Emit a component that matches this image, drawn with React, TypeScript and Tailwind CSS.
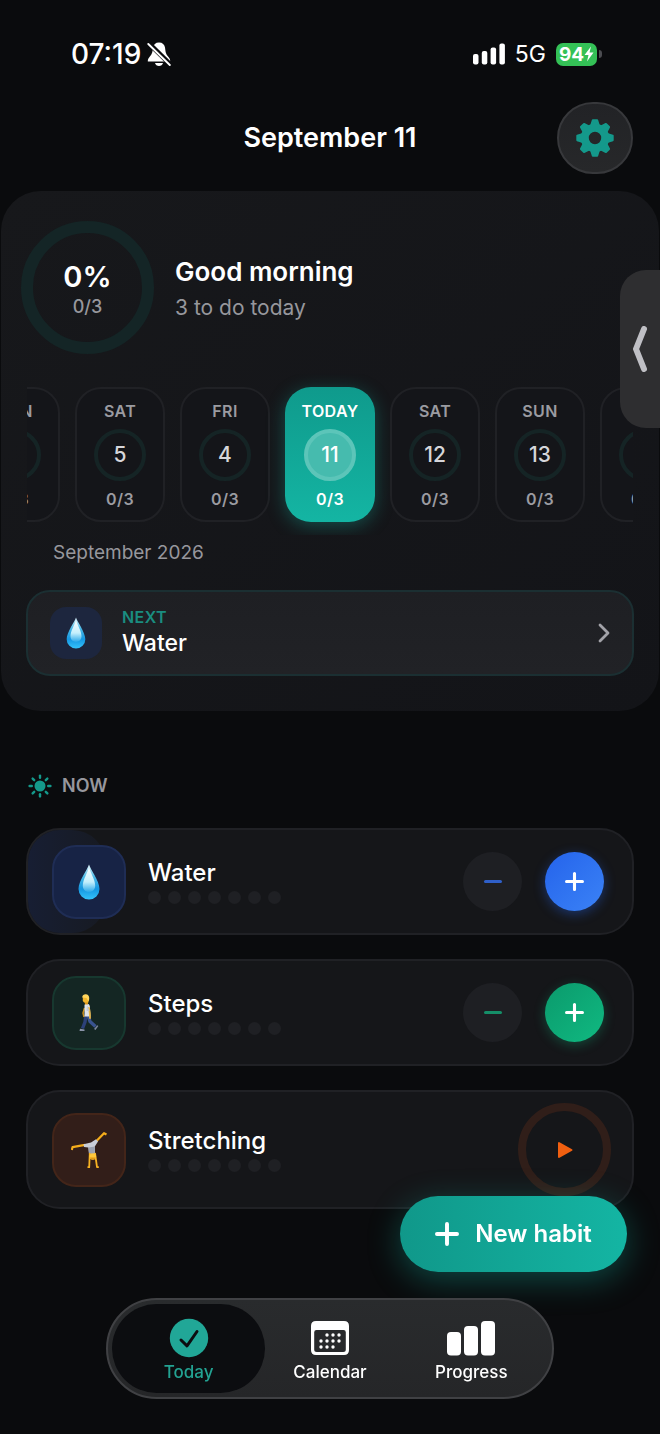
import React, { ReactNode } from 'react';
import clsx from 'clsx';

interface Day {
  label: string;
  date: string;
  today?: boolean;
}

interface Habit {
  name: string;
  icon: ReactNode;
  tile: string;
  kind: 'counter' | 'timer';
  minus?: string;
  plus?: string;
  fill?: string;
}

const days: Day[] = [
  { label: 'SUN', date: '6' },
  { label: 'SAT', date: '5' },
  { label: 'FRI', date: '4' },
  { label: 'TODAY', date: '11', today: true },
  { label: 'SAT', date: '12' },
  { label: 'SUN', date: '13' },
  { label: 'MON', date: '14' },
];

function WaterDrop({ className }: { className: string }) {
  return (
    <svg viewBox="0 0 22 36" className={className} aria-hidden="true">
      <defs>
        <linearGradient id="drop-body" x1="0" y1="0" x2="0" y2="1">
          <stop offset="0" stopColor="#e4f7fd" />
          <stop offset="0.35" stopColor="#4bb9e6" />
          <stop offset="0.7" stopColor="#1597e2" />
          <stop offset="1" stopColor="#35c3fb" />
        </linearGradient>
        <linearGradient id="drop-shine" x1="0" y1="0" x2="0" y2="1">
          <stop offset="0" stopColor="#ffffff" />
          <stop offset="0.6" stopColor="#c4effc" />
          <stop offset="1" stopColor="#2ba9ea" />
        </linearGradient>
      </defs>
      <path d="M11 0.5C12 4.5 21.5 17 21.5 25a10.5 10.5 0 0 1-21 0C0.5 17 10 4.5 11 0.5Z" fill="url(#drop-body)" />
      <path d="M11 3C12 8 17.2 15.5 17.2 21.5c0 4-2.6 6.5-6.2 6.5s-6.200-2.500-6.200-6.500C4.800 15.500 10 8 11 3Z" fill="url(#drop-shine)" />
    </svg>
  );
}

function Walker() {
  return (
    <svg viewBox="0 0 20 38" className="h-[38px] w-5" aria-hidden="true">
      {/* back leg, front leg */}
      <path d="M7 21L6 28L3.500 34.500" fill="none" stroke="#2c4179" strokeWidth="3.400" strokeLinejoin="round" />
      <path d="M9 21L11 27.500L16.500 32.500" fill="none" stroke="#39538f" strokeWidth="3.400" strokeLinejoin="round" />
      <path d="M1 34.800L5.500 35.500L5.500 37H0.500Z" fill="#8a93a8" />
      <path d="M15 35L18.300 31.200L19.300 32L16.500 36Z" fill="#7e879d" />
      {/* arm behind, shirt, arm in front */}
      <path d="M5.500 14L4 19L5 23" fill="none" stroke="#c98f1e" strokeWidth="1.500" />
      <path d="M5.500 11C6.500 9 9.500 9 10.800 12L11.500 22.500H5.500Z" fill="#dfe3ea" />
      <path d="M10 14L10.800 19L11 24" fill="none" stroke="#e9b648" strokeWidth="1.800" strokeLinecap="round" />
      <path d="M8 11L10.500 17H7.500Z" fill="#c5cbd6" />
      <path d="M5.500 7H9V10.500H6Z" fill="#d9951b" />
      <path d="M3.800 3H9.500V8.500H5L3.800 7Z" fill="#f3b52c" />
      <path d="M3.200 3.500C3.200 0.500 6 0 7.800 0.500C10.500 1 10.800 5 9.500 7.500L7.500 4Z" fill="#ffd55c" />
    </svg>
  );
}

function Cartwheel() {
  return (
    <svg viewBox="0 0 36 38" className="h-[38px] w-9" aria-hidden="true">
      <path d="M14 13.800L1.500 16.200L0.800 19" fill="none" stroke="#f5ad1b" strokeWidth="2.200" strokeLinejoin="round" />
      <path d="M25 10.500L33 2.200L35.500 3.500" fill="none" stroke="#f5ad1b" strokeWidth="2.200" strokeLinejoin="round" />
      <path d="M12.500 13.300L20 11.500L25 8.300L27 10.500L23.800 15.500L24 23H18L17.300 16.500L13 16Z" fill="#c9ced8" />
      <path d="M17.500 16.500L23.800 15.500L23.800 23H18Z" fill="#9ba2b0" />
      <path d="M18.800 22L18.200 36.200H16.500" fill="none" stroke="#f7b222" strokeWidth="1.800" strokeLinejoin="round" />
      <path d="M24 22L26 36.200H27.800" fill="none" stroke="#f7b222" strokeWidth="1.800" strokeLinejoin="round" />
      <circle cx="21.800" cy="25.500" r="3.300" fill="#ffc93c" />
      <path d="M18.800 26.500C19.800 29.500 23.800 29.500 24.800 26.500Z" fill="#e29a17" />
    </svg>
  );
}

function Gear() {
  const teeth = [0, 45, 90, 135, 180, 225, 270, 315];
  return (
    <svg viewBox="0 0 38 38" className="size-[38px] text-[#14998b]" aria-hidden="true">
      <circle cx="19" cy="19" r="10.200" fill="none" stroke="currentColor" strokeWidth="8" />
      {teeth.map((angle) => (
        <path
          key={angle}
          d="M15 7L16.800 1.300H21.200L23 7Z"
          transform={`rotate(${angle} 19 19)`}
          fill="currentColor"
          stroke="currentColor"
          strokeWidth="2"
          strokeLinejoin="round"
        />
      ))}
    </svg>
  );
}

function Sun() {
  const rays = [0, 45, 90, 135, 180, 225, 270, 315];
  return (
    <svg viewBox="0 0 24 24" className="size-6 text-[#14998b]" aria-hidden="true">
      <circle cx="12" cy="12" r="5.500" fill="currentColor" />
      {rays.map((angle) => (
        <path
          key={angle}
          d="M12 1.600V3.800"
          transform={`rotate(${angle} 12 12)`}
          stroke="currentColor"
          strokeWidth="2.400"
          strokeLinecap="round"
        />
      ))}
    </svg>
  );
}

function Plus({ className }: { className: string }) {
  return (
    <svg viewBox="0 0 22 22" className={className} aria-hidden="true">
      <path d="M11 1.800V20.200M1.800 11H20.200" stroke="currentColor" strokeWidth="3.600" strokeLinecap="round" />
    </svg>
  );
}

function StatusBar() {
  return (
    <div className="flex h-7 items-center justify-between pr-[58px] pl-[71px]">
      <div className="flex items-center gap-1.5">
        <span className="text-[28px] font-medium">07:19</span>
        <svg viewBox="0 0 24 24" className="size-6" aria-label="Silent mode">
          <path
            d="M12 0.500C8.500 0.500 6.500 2.500 6 5.500C5.500 9 5.500 12 2.500 15C1 17 0.800 17.500 0.800 19.500H23.200C23.200 17.500 23 17 21.500 15C18.500 12 18.500 9 18 5.500C17.500 2.500 15.500 0.500 12 0.500Z"
            fill="#fff"
          />
          <path d="M8 21H16C15.500 23 14 24 12 24S8.500 23 8 21Z" fill="#fff" />
          <path d="M2 1.500L23.500 22.500" stroke="#0a0b0d" strokeWidth="4.800" />
          <path d="M1.300 2L22.800 23" stroke="#fff" strokeWidth="1.900" strokeLinecap="round" />
        </svg>
      </div>
      <div className="flex items-center">
        <svg viewBox="0 0 32 22" className="h-[22px] w-8" aria-label="Signal strength">
          <rect x="0" y="11" width="5.500" height="10.500" rx="2" fill="#fff" />
          <rect x="8.800" y="8" width="5.500" height="13.500" rx="2" fill="#fff" />
          <rect x="17.600" y="4.500" width="5.500" height="17" rx="2" fill="#fff" />
          <rect x="26.400" y="0.500" width="5.500" height="21" rx="2" fill="#fff" />
        </svg>
        <span className="ml-2.5 text-[23px]">5G</span>
        <div className="ml-2.5 flex h-[23px] w-[41px] items-center justify-center rounded-[7px] bg-[#34c156]">
          <span className="text-[19px] leading-none font-bold">94</span>
          <svg viewBox="0 0 10 16" className="h-4 w-2.5" aria-label="Charging">
            <path d="M7 0.500L0.500 9H4.500L3 15.500L9.500 6.500H5.500Z" fill="#fff" />
          </svg>
        </div>
        <span className="ml-0.5 h-2 w-[3px] rounded-r-full bg-[#4b4c50]" />
      </div>
    </div>
  );
}

function DayPill({ label, date, today }: Day) {
  return (
    <button
      type="button"
      className={clsx(
        'flex h-[135px] w-[90px] shrink-0 flex-col items-center gap-2 rounded-[26px]',
        today
          ? 'bg-linear-to-b from-[#0f9a8c] to-[#14b5a3] pt-3.5 text-white shadow-[0_4px_18px_rgba(20,184,166,0.35)]'
          : 'border-2 border-[#202125] bg-[#141519] pt-3 text-[#9b9ba1]',
      )}
    >
      <span className="text-base leading-5 font-semibold tracking-wide">{label}</span>
      <span
        className={clsx(
          'flex size-[52px] items-center justify-center rounded-full border-4 text-[21px] font-medium',
          today ? 'border-[#5cc5b9] bg-[#46bbae] text-white' : 'border-[#152425] text-[#d6d6da]',
        )}
      >
        {date}
      </span>
      <span className="text-base leading-5 font-semibold tracking-wide">0/3</span>
    </button>
  );
}

function Summary() {
  return (
    <section className="mx-px mt-[17px] rounded-[40px] bg-linear-to-br from-[#17181b] to-[#131418] pt-[30px] pb-[35px]">
      <div className="flex items-center gap-[21px] pl-5">
        <div className="flex size-[133px] flex-col items-center justify-center rounded-full border-[12px] border-[#142526] pt-1.5">
          <span className="text-[29px] leading-8 font-semibold">0%</span>
          <span className="text-lg leading-7 font-medium text-[#97979d]">0/3</span>
        </div>
        <div className="flex flex-col gap-1 pt-1">
          <h2 className="text-[26px] leading-8 font-semibold">Good morning</h2>
          <p className="text-[21px] leading-8 text-[#97979d]">3 to do today</p>
        </div>
      </div>

      <div className="mx-[26px] mt-5 flex justify-center gap-[15px] overflow-hidden py-[13px]">
        {days.map((day) => (
          <DayPill key={day.date} {...day} />
        ))}
      </div>

      <p className="mt-1 ml-[52px] text-[19px] leading-7 text-[#97979d]">September 2026</p>

      <button
        type="button"
        className="mx-[25px] mt-[23px] flex h-[86px] w-[calc(100%-50px)] items-center rounded-[24px] border-2 border-[#1b2f32] bg-linear-to-b from-[#1e1f23] to-[#212226] px-[22px] text-left"
      >
        <span className="flex size-[52px] items-center justify-center rounded-2xl bg-[#1d263e]">
          <WaterDrop className="h-8 w-5" />
        </span>
        <span className="ml-5 flex flex-col pb-1">
          <span className="text-base leading-6 font-semibold tracking-wide text-[#1a8d80]">NEXT</span>
          <span className="text-[23px] leading-7 font-medium">Water</span>
        </span>
        <svg viewBox="0 0 12 20" className="ml-auto h-5 w-3" aria-hidden="true">
          <path d="M2 2L10 10L2 18" fill="none" stroke="#a2a2a8" strokeWidth="2.800" strokeLinecap="round" strokeLinejoin="round" />
        </svg>
      </button>
    </section>
  );
}

const habits: Habit[] = [
  {
    name: 'Water',
    icon: <WaterDrop className="h-9 w-[22px]" />,
    tile: 'border-[#1f2d55] bg-[#172345]',
    kind: 'counter',
    minus: 'text-[#2f5fc8]',
    plus: 'from-[#2563eb] to-[#3b82f6] shadow-[0_3px_12px_rgba(37,99,235,0.4)]',
    fill: 'from-[#171e33] to-[#171a22]',
  },
  {
    name: 'Steps',
    icon: <Walker />,
    tile: 'border-[#17382f] bg-[#142623]',
    kind: 'counter',
    minus: 'text-[#158e68]',
    plus: 'from-[#0b9a6c] to-[#10b981] shadow-[0_3px_12px_rgba(16,185,129,0.3)]',
  },
  {
    name: 'Stretching',
    icon: <Cartwheel />,
    tile: 'border-[#432519] bg-[#321e19]',
    kind: 'timer',
  },
];

function HabitCard({ name, icon, tile, kind, minus, plus, fill }: Habit) {
  return (
    <article
      className={clsx(
        'relative flex items-center overflow-hidden rounded-[34px] border-2 border-[#202125] bg-[#151619] pl-6',
        kind === 'counter' ? 'h-[107px] pr-7' : 'h-[119px] pr-[21px]',
      )}
    >
      {fill && <div className={clsx('absolute inset-y-0 left-0 w-[78px] rounded-r-[34px] bg-linear-to-r', fill)} />}
      <div className={clsx('relative flex size-[74px] items-center justify-center rounded-[24px] border-2', tile)}>
        {icon}
      </div>
      <div className="ml-[22px] flex flex-col gap-1">
        <h3 className="text-2xl leading-7 font-medium">{name}</h3>
        {/* last seven days */}
        <div className="flex gap-[7px]">
          {Array.from({ length: 7 }, (_, i) => (
            <span key={i} className="size-[13px] rounded-full bg-[#1f2024]" />
          ))}
        </div>
      </div>
      {kind === 'counter' ? (
        <div className="ml-auto flex gap-[23px]">
          <button
            type="button"
            aria-label={`Decrease ${name}`}
            className={clsx('flex size-[59px] items-center justify-center rounded-full bg-[#1e1f23]', minus)}
          >
            <span className="h-[3px] w-[18px] rounded-full bg-current" />
          </button>
          <button
            type="button"
            aria-label={`Increase ${name}`}
            className={clsx('flex size-[59px] items-center justify-center rounded-full bg-linear-to-br', plus)}
          >
            <Plus className="size-[19px]" />
          </button>
        </div>
      ) : (
        <button
          type="button"
          aria-label={`Start ${name}`}
          className="ml-auto flex size-[93px] items-center justify-center rounded-full border-8 border-[#301e19]"
        >
          <svg viewBox="0 0 16 18" className="h-[18px] w-4 text-[#f05f10]" aria-hidden="true">
            <path d="M2 2V16L14.500 9Z" fill="currentColor" stroke="currentColor" strokeWidth="2" strokeLinejoin="round" />
          </svg>
        </button>
      )}
    </article>
  );
}

function TabBar() {
  return (
    <nav className="fixed bottom-[35px] left-1/2 grid h-[101px] w-[448px] -translate-x-1/2 grid-cols-3 rounded-full border-2 border-[#404144] bg-linear-to-b from-[#292b2d] to-[#252628] px-2.5 py-1 text-[17px] font-medium">
      <a href="#today" aria-current="page" className="-mx-1.5 flex flex-col items-center justify-center rounded-full bg-[#0c0d10] pt-1 text-[#23a292]">
        <svg viewBox="0 0 40 40" className="size-10" aria-hidden="true">
          <circle cx="20" cy="20" r="19.200" fill="#21a797" />
          <path d="M12 22L18 27.800L28 13.500" fill="none" stroke="#0c0d10" strokeWidth="3" strokeLinecap="round" strokeLinejoin="round" />
        </svg>
        <span className="mt-0.5 leading-6">Today</span>
      </a>
      <a href="#calendar" className="flex flex-col items-center justify-center pt-1">
        <svg viewBox="0 0 40 40" className="size-10" aria-hidden="true">
          <path
            fillRule="evenodd"
            d="M6 3H34Q39 3 39 8V32Q39 37 34 37H6Q1 37 1 32V8Q1 3 6 3ZM6.500 12Q4.200 12 4.200 14.300V31.500Q4.200 34 6.700 34H33.300Q35.800 34 35.800 31.500V14.300Q35.800 12 33.500 12Z"
            fill="#fff"
          />
          {[
            [17, 17], [23, 17], [29, 17],
            [11, 23], [17, 23], [23, 23], [29, 23],
            [11, 29], [17, 29], [23, 29],
          ].map(([x, y]) => (
            <circle key={`${x}-${y}`} cx={x} cy={y} r="1.700" fill="#fff" />
          ))}
        </svg>
        <span className="mt-0.5 leading-6">Calendar</span>
      </a>
      <a href="#progress" className="flex flex-col items-center justify-center pt-1">
        <svg viewBox="0 0 50 40" className="h-10 w-[50px]" aria-hidden="true">
          <rect x="1" y="14" width="14" height="23.500" rx="4" fill="#fff" />
          <rect x="18" y="8" width="14" height="29.500" rx="4" fill="#fff" />
          <rect x="35" y="3" width="14" height="34.500" rx="4" fill="#fff" />
        </svg>
        <span className="mt-0.5 leading-6">Progress</span>
      </a>
    </nav>
  );
}

export default function App() {
  return (
    <div className="relative min-h-screen bg-[#0a0b0d] pt-10 pb-56 font-['Inter',sans-serif] text-white">
      <StatusBar />

      <header className="mt-[34px] grid grid-cols-[1fr_auto_1fr] items-center px-[27px]">
        <h1 className="col-start-2 text-[27px] font-semibold">September 11</h1>
        <button
          type="button"
          aria-label="Settings"
          className="flex h-[72px] w-[76px] items-center justify-center justify-self-end rounded-full border-2 border-[#37383b] bg-linear-to-b from-[#222326] to-[#27282a]"
        >
          <Gear />
        </button>
      </header>

      <Summary />

      <main className="mt-[61px] px-[26px]">
        <div className="flex h-7 items-center gap-2.5 pl-0.5">
          <Sun />
          <h2 className="text-lg font-semibold text-[#97979d]">NOW</h2>
        </div>
        <div className="mt-7 flex flex-col gap-6">
          {habits.map((habit) => (
            <HabitCard key={habit.name} {...habit} />
          ))}
        </div>
      </main>

      {/* pull-out handle on the screen edge */}
      <button
        type="button"
        aria-label="Open side panel"
        className="absolute top-[270px] right-0 flex h-[158px] w-10 items-center justify-center rounded-l-[26px] bg-[#2e2e30]"
      >
        <svg viewBox="0 0 16 46" className="h-[46px] w-4" aria-hidden="true">
          <path d="M12 3L4 23L12 43" fill="none" stroke="#bfbfc4" strokeWidth="6" strokeLinecap="round" strokeLinejoin="round" />
        </svg>
      </button>

      <button
        type="button"
        className="fixed right-[33px] bottom-[162px] flex h-[76px] w-[227px] items-center justify-center gap-4 rounded-full bg-linear-to-r from-[#10988a] to-[#14b5a3] text-2xl font-semibold shadow-[0_8px_32px_rgba(20,184,166,0.35)]"
      >
        <Plus className="size-6" />
        New habit
      </button>

      <TabBar />
    </div>
  );
}
